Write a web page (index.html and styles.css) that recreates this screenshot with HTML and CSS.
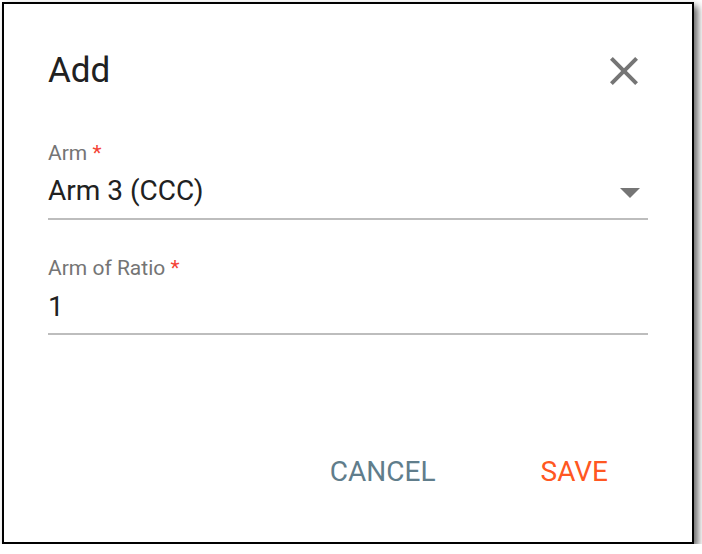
FILE: index.html
```html
<!DOCTYPE html>
<html>
<head>
<meta charset="utf-8">
<link rel="stylesheet" href="styles.css">
</head>
<body>
<div class="dialog">
  <div class="header">
    <h1 class="title">Add</h1>
    <button class="close" aria-label="close">
      <svg width="48" height="48" viewBox="0 0 24 24"><path d="M19 6.41L17.59 5 12 10.59 6.41 5 5 6.41 10.59 12 5 17.59 6.41 19 12 13.41 17.59 19 19 17.59 13.41 12z" fill="#757575"/></svg>
    </button>
  </div>
  <div class="field field-select">
    <label class="label">Arm <span class="req">*</span></label>
    <div class="control">
      <span class="value">Arm 3 (CCC)</span>
      <svg class="arrow" width="20" height="10" viewBox="0 0 20 10"><polygon points="0,0 20,0 10,10" fill="#757575"/></svg>
    </div>
  </div>
  <div class="field field-input">
    <label class="label">Arm of Ratio <span class="req">*</span></label>
    <div class="control">
      <span class="value">1</span>
    </div>
  </div>
  <div class="actions">
    <button class="btn btn-cancel">CANCEL</button>
    <button class="btn btn-save">SAVE</button>
  </div>
</div>
</body>
</html>
```
FILE: styles.css
```css
html, body {
  margin: 0;
  padding: 0;
  background: #ffffff;
}
body {
  font-family: Roboto, "Liberation Sans", sans-serif;
}
.dialog {
  box-sizing: border-box;
  margin: 2px 0 0 2px;
  width: 692px;
  height: 542px;
  border: 2px solid #000;
  box-shadow: 4px 4px 7px rgba(0, 0, 0, 0.6);
  background: #fff;
  padding: 43px 44px 0 44px;
}
.header {
  display: flex;
  align-items: center;
  justify-content: space-between;
  height: 48px;
}
.title {
  margin: 0;
  font-size: 35px;
  line-height: 48px;
  font-weight: 400;
  color: #212121;
}
.close {
  border: 0;
  background: transparent;
  padding: 0;
  width: 48px;
  height: 48px;
  display: flex;
}
.field {
  display: flex;
  flex-direction: column;
}
.field-select {
  margin-top: 46px;
}
.field-input {
  margin-top: 36px;
}
.label {
  font-size: 21px;
  line-height: 24px;
  color: #757575;
}
.req {
  color: #f44336;
}
.control {
  display: flex;
  align-items: flex-start;
  justify-content: space-between;
  border-bottom: 2px solid #bdbdbd;
}
.field-select .control {
  margin-top: 8px;
  padding-bottom: 9px;
}
.field-input .control {
  margin-top: 9px;
  padding-bottom: 8px;
}
.value {
  font-size: 28px;
  line-height: 36px;
  color: #212121;
}
.arrow {
  margin-top: 15px;
  margin-right: 8px;
}
.actions {
  display: flex;
  justify-content: flex-end;
  gap: 77px;
  margin-top: 119px;
  padding-right: 26px;
}
.btn {
  border: 0;
  background: transparent;
  font-family: Roboto, "Liberation Sans", sans-serif;
  font-size: 28px;
  line-height: 36px;
  font-weight: 400;
  padding: 0 14px;
}
.btn-cancel {
  color: #607d8b;
}
.btn-save {
  color: #ff5722;
}
```
